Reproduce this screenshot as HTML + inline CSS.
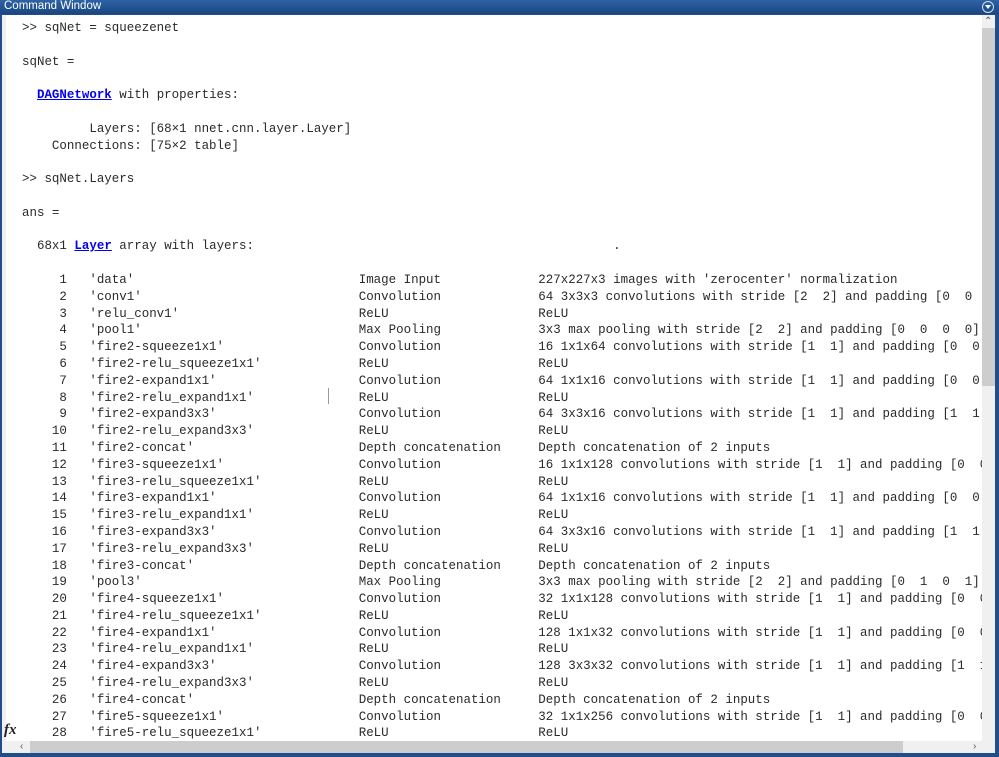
<!DOCTYPE html>
<html><head><style>
html,body{margin:0;padding:0;width:999px;height:757px;overflow:hidden;background:#fff;}
.win{position:absolute;left:0;top:0;width:999px;height:757px;background:#1f4e8a;}
.title{position:absolute;left:0;top:0;width:999px;height:14px;background:linear-gradient(#2d62a4,#1a4682);color:#fff;font:11.5px "Liberation Sans",sans-serif;line-height:13px;}
.title span{position:absolute;left:4px;top:0;}
.tbtn{position:absolute;left:982px;top:1px;width:10px;height:10px;border:1px solid #cfe0f5;border-radius:50%;}
.tbtn:after{content:"";position:absolute;left:2px;top:3px;border-left:3px solid transparent;border-right:3px solid transparent;border-top:4px solid #fff;}
.content{position:absolute;left:2px;top:15px;width:980px;height:726px;background:#fff;overflow:hidden;}
.gut{position:absolute;left:2px;top:15px;width:4px;height:738px;background:#eef0f2;}
pre{position:absolute;left:20px;top:5px;margin:0;font-family:"Liberation Mono",monospace;font-size:12.47px;line-height:16.8px;color:#2a2a2a;white-space:pre;}
a{color:#0000ee;font-weight:bold;text-decoration:underline;}
.vs{position:absolute;left:982px;top:15px;width:13px;height:726px;background:#f0f0f0;}
.vth{position:absolute;left:982px;top:28px;width:13px;height:358px;background:#cdcdcd;}
.hs{position:absolute;left:2px;top:741px;width:993px;height:12px;background:#f0f0f0;}
.hth{position:absolute;left:30px;top:741px;width:873px;height:12px;background:#cdcdcd;}
.arr{position:absolute;font:10px "Liberation Sans",sans-serif;color:#555;}
.fx{position:absolute;left:4px;top:722px;font:italic bold 15px "Liberation Serif",serif;color:#222;}
</style></head><body>
<div class="win"></div>
<div class="title"><span>Command Window</span><div class="tbtn"></div></div>
<div class="content"><pre>&gt;&gt; sqNet = squeezenet

sqNet = 

  <a>DAGNetwork</a> with properties:

         Layers: [68×1 nnet.cnn.layer.Layer]
    Connections: [75×2 table]

&gt;&gt; sqNet.Layers

ans = 

  68x1 <a>Layer</a> array with layers:                                                .

     1   'data'                              Image Input             227x227x3 images with 'zerocenter' normalization
     2   'conv1'                             Convolution             64 3x3x3 convolutions with stride [2  2] and padding [0  0  0  0]
     3   'relu_conv1'                        ReLU                    ReLU
     4   'pool1'                             Max Pooling             3x3 max pooling with stride [2  2] and padding [0  0  0  0]
     5   'fire2-squeeze1x1'                  Convolution             16 1x1x64 convolutions with stride [1  1] and padding [0  0  0  0]
     6   'fire2-relu_squeeze1x1'             ReLU                    ReLU
     7   'fire2-expand1x1'                   Convolution             64 1x1x16 convolutions with stride [1  1] and padding [0  0  0  0]
     8   'fire2-relu_expand1x1'              ReLU                    ReLU
     9   'fire2-expand3x3'                   Convolution             64 3x3x16 convolutions with stride [1  1] and padding [1  1  1  1]
    10   'fire2-relu_expand3x3'              ReLU                    ReLU
    11   'fire2-concat'                      Depth concatenation     Depth concatenation of 2 inputs
    12   'fire3-squeeze1x1'                  Convolution             16 1x1x128 convolutions with stride [1  1] and padding [0  0  0  0]
    13   'fire3-relu_squeeze1x1'             ReLU                    ReLU
    14   'fire3-expand1x1'                   Convolution             64 1x1x16 convolutions with stride [1  1] and padding [0  0  0  0]
    15   'fire3-relu_expand1x1'              ReLU                    ReLU
    16   'fire3-expand3x3'                   Convolution             64 3x3x16 convolutions with stride [1  1] and padding [1  1  1  1]
    17   'fire3-relu_expand3x3'              ReLU                    ReLU
    18   'fire3-concat'                      Depth concatenation     Depth concatenation of 2 inputs
    19   'pool3'                             Max Pooling             3x3 max pooling with stride [2  2] and padding [0  1  0  1]
    20   'fire4-squeeze1x1'                  Convolution             32 1x1x128 convolutions with stride [1  1] and padding [0  0  0  0]
    21   'fire4-relu_squeeze1x1'             ReLU                    ReLU
    22   'fire4-expand1x1'                   Convolution             128 1x1x32 convolutions with stride [1  1] and padding [0  0  0  0]
    23   'fire4-relu_expand1x1'              ReLU                    ReLU
    24   'fire4-expand3x3'                   Convolution             128 3x3x32 convolutions with stride [1  1] and padding [1  1  1  1]
    25   'fire4-relu_expand3x3'              ReLU                    ReLU
    26   'fire4-concat'                      Depth concatenation     Depth concatenation of 2 inputs
    27   'fire5-squeeze1x1'                  Convolution             32 1x1x256 convolutions with stride [1  1] and padding [0  0  0  0]
    28   'fire5-relu_squeeze1x1'             ReLU                    ReLU</pre>
<div style="position:absolute;left:326px;top:373px;width:1px;height:16px;background:#999"></div>
</div>
<div class="gut"></div>
<div class="fx">fx</div>
<div class="vs"></div><div class="vth"></div>
<div class="arr" style="left:984px;top:16px;">&#8963;</div>
<div class="arr" style="left:985px;top:738px;">&#8964;</div>
<div class="hs"></div><div class="hth"></div>
<div class="arr" style="left:20px;top:741px;">&lsaquo;</div>
<div class="arr" style="left:973px;top:741px;">&rsaquo;</div>
</body></html>
